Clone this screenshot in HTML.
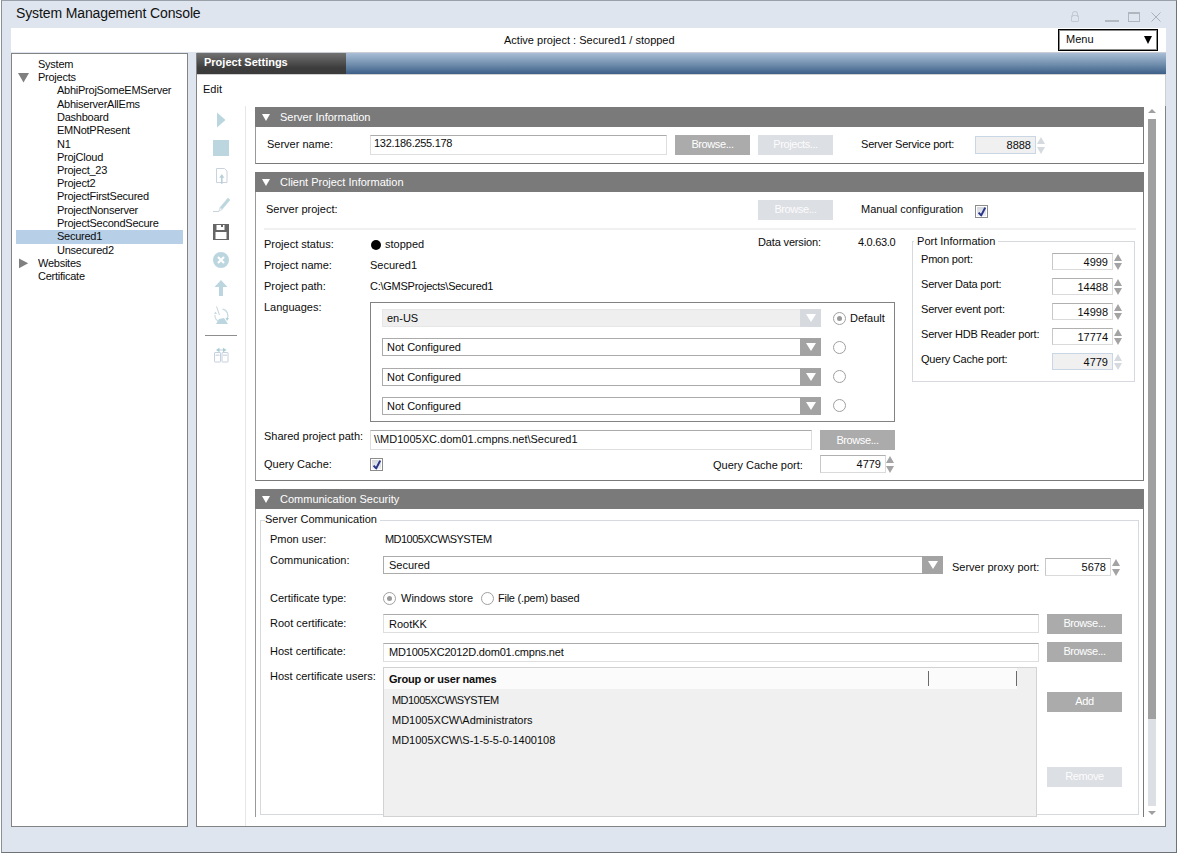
<!DOCTYPE html>
<html><head><meta charset="utf-8">
<style>
*{box-sizing:border-box;margin:0;padding:0}
html,body{width:1178px;height:854px;overflow:hidden;background:#fff;font-family:"Liberation Sans",sans-serif;font-size:11px;color:#0c0c0c}
.a{position:absolute}
.t{position:absolute;white-space:nowrap;line-height:13px;font-size:11px}
.sh{position:absolute;background:#7a7a7a;color:#fff;height:20px;left:255px;width:889px}
.sh i{position:absolute;left:7px;top:7px;width:0;height:0;border-left:4px solid transparent;border-right:4px solid transparent;border-top:7px solid #fff}
.sh span{position:absolute;left:25px;top:4px;line-height:13px;white-space:nowrap}
.btn{position:absolute;background:#ababab;color:#fff;text-align:center;line-height:19px;height:20px;width:75px;letter-spacing:-0.4px}
.btnd{position:absolute;background:#dcdfe3;color:#fcfcfd;text-align:center;line-height:19px;height:20px;width:75px;letter-spacing:-0.4px}
.tb{position:absolute;background:#fff;border:1px solid #dedede;border-top-color:#ababab}
.pb{position:absolute;background:#fff;border:1px solid #dadada;border-top-color:#b0b0b0;border-left-color:#c8c8c8;text-align:right;padding-right:4px;line-height:16px;height:17px;width:61px}
.sp{position:absolute;width:9px;height:17px}
.sp:before{content:"";position:absolute;left:0;top:1px;border-left:4px solid transparent;border-right:4px solid transparent;border-bottom:7.5px solid #a3a3a3}
.sp:after{content:"";position:absolute;left:0;bottom:0;border-left:4px solid transparent;border-right:4px solid transparent;border-top:7.5px solid #a3a3a3}
.sp.d:before{border-bottom-color:#d6dadf}
.sp.d:after{border-top-color:#d6dadf}
.cb{position:absolute;height:18px;background:#fff;border:1px solid #ababab}
.cb b{position:absolute;right:-1px;top:-1px;width:21px;height:18px;background:#a3a3a3}
.cb b:after{content:"";position:absolute;left:6px;top:5px;border-left:5px solid transparent;border-right:5px solid transparent;border-top:8px solid #fff}
.rd{position:absolute;width:13px;height:13px;border:1px solid #a0a0a0;border-radius:50%;background:#fff}
.rd.on:after{content:"";position:absolute;left:3px;top:3px;width:5px;height:5px;border-radius:50%;background:#999}
.ck{position:absolute;width:13px;height:13px;border:1px solid #8c8c8c;background:#fff}.ck:after{content:"";position:absolute;left:1px;top:1px;width:9px;height:9px;background:linear-gradient(#d3d7dd,#eef0f2)}
.grp{position:absolute;border:1px solid #d6d9dd}
</style></head><body>

<div class="a" style="left:1px;top:0;width:1176px;height:853px;background:#dfe5ee;border-top:1px solid #9aa0a8;border-left:1px solid #8a9098;border-right:1px solid #6e7378;border-bottom:1px solid #6e7378"></div>
<div class="t" style="left:16px;top:5px;font-size:14px;line-height:16px;letter-spacing:-0.12px;color:#111">System Management Console</div>
<div class="a" style="left:1071px;top:15px;width:8px;height:7px;border:1px solid #c3cad3;border-radius:1px"></div>
<div class="a" style="left:1072px;top:11px;width:6px;height:6px;border:1px solid #c3cad3;border-bottom:none;border-radius:3px 3px 0 0"></div>
<div class="a" style="left:1105px;top:20px;width:14px;height:2px;background:#b3b9c1"></div>
<div class="a" style="left:1128px;top:12px;width:12px;height:10px;border:1px solid #b0b6be;border-top-width:2px"></div>
<svg class="a" style="left:1151px;top:12px" width="10" height="10"><path d="M0.5 0.5L9.5 9.5M9.5 0.5L0.5 9.5" stroke="#a9b0b8" stroke-width="1"/></svg>
<div class="a" style="left:11px;top:28px;width:1155px;height:24px;background:#fff"></div>
<div class="t" style="left:504px;top:34px;">Active project : Secured1 / stopped</div>
<div class="a" style="left:1058px;top:29px;width:100px;height:22px;border:1px solid #000;box-shadow:inset 0 0 0 1px rgba(0,0,0,0.45);background:#fff"></div>
<div class="t" style="left:1066px;top:33px;">Menu</div>
<div class="a" style="left:1144px;top:36px;width:0;height:0;border-left:4.75px solid transparent;border-right:4.75px solid transparent;border-top:8px solid #000"></div>
<div class="a" style="left:11px;top:53px;width:177px;height:774px;background:#fff;border:1px solid #838383"></div>
<div class="a" style="left:16px;top:230px;width:167px;height:14px;background:#b7cfe7"></div>
<div class="t" style="left:38px;top:58px;letter-spacing:-0.25px">System</div>
<div class="t" style="left:38px;top:71px;letter-spacing:-0.25px">Projects</div>
<div class="t" style="left:57px;top:84px;letter-spacing:-0.25px">AbhiProjSomeEMServer</div>
<div class="t" style="left:57px;top:98px;letter-spacing:-0.25px">AbhiserverAllEms</div>
<div class="t" style="left:57px;top:111px;letter-spacing:-0.25px">Dashboard</div>
<div class="t" style="left:57px;top:124px;letter-spacing:-0.25px">EMNotPResent</div>
<div class="t" style="left:57px;top:138px;letter-spacing:-0.25px">N1</div>
<div class="t" style="left:57px;top:151px;letter-spacing:-0.25px">ProjCloud</div>
<div class="t" style="left:57px;top:164px;letter-spacing:-0.25px">Project_23</div>
<div class="t" style="left:57px;top:177px;letter-spacing:-0.25px">Project2</div>
<div class="t" style="left:57px;top:190px;letter-spacing:-0.25px">ProjectFirstSecured</div>
<div class="t" style="left:57px;top:204px;letter-spacing:-0.25px">ProjectNonserver</div>
<div class="t" style="left:57px;top:217px;letter-spacing:-0.25px">ProjectSecondSecure</div>
<div class="t" style="left:57px;top:230px;letter-spacing:-0.25px">Secured1</div>
<div class="t" style="left:57px;top:244px;letter-spacing:-0.25px">Unsecured2</div>
<div class="t" style="left:38px;top:257px;letter-spacing:-0.25px">Websites</div>
<div class="t" style="left:38px;top:270px;letter-spacing:-0.25px">Certificate</div>
<svg class="a" style="left:0;top:0" width="40" height="280"><path d="M18 73H29L23.5 82.6Z" fill="#808080"/><path d="M19 258.4V268.2L28.2 263.3Z" fill="#808080"/></svg>
<div class="a" style="left:196px;top:53px;width:970px;height:774px;background:#fff;border-left:1px solid #838383;border-right:1px solid #838383;border-bottom:1px solid #838383"></div>
<div class="a" style="left:197px;top:52px;width:969px;height:1px;background:#c9ced4"></div>
<div class="a" style="left:197px;top:53px;width:149px;height:21px;background:linear-gradient(#727272,#3d3d3d 70%,#3b3b3b)"></div>
<div class="a" style="left:346px;top:53px;width:820px;height:21px;background:linear-gradient(#a9bed6,#6f8dac 55%,#3d5f87)"></div>
<div class="a" style="left:1165px;top:74px;width:1px;height:32px;background:#cfcfcf"></div>
<div class="a" style="left:197px;top:74px;width:968px;height:1px;background:#d0d0d0"></div>
<div class="t" style="left:204px;top:56px;font-weight:bold;color:#fff">Project Settings</div>
<div class="t" style="left:203px;top:83px;">Edit</div>
<div class="a" style="left:245px;top:106px;width:1px;height:720px;background:#e6e6e6"></div>
<div class="a" style="left:255px;top:107px;width:889px;height:57px;border:1px solid #7a7a7a;border-left-color:#999;border-top:none"></div>
<div class="sh" style="top:107px"><i></i><span>Server Information</span></div>
<div class="t" style="left:267px;top:138px;">Server name:</div>
<div class="tb" style="left:370px;top:135px;width:297px;height:20px"></div>
<div class="t" style="left:374px;top:137px;letter-spacing:-0.3px">132.186.255.178</div>
<div class="btn" style="left:675px;top:135px">Browse...</div>
<div class="btnd" style="left:758px;top:135px">Projects...</div>
<div class="t" style="left:861px;top:138px;letter-spacing:-0.2px">Server Service port:</div>
<div class="pb" style="left:975px;top:136px;background:#f0f0f0;border-color:#c8d6e6;width:61px;height:18px;line-height:17px">8888</div>
<div class="sp d" style="left:1037px;top:136px;height:18px"></div>
<div class="a" style="left:255px;top:172px;width:889px;height:309px;border:1px solid #7a7a7a;border-left-color:#999;border-top:none"></div>
<div class="sh" style="top:172px"><i></i><span>Client Project Information</span></div>
<div class="t" style="left:266px;top:203px;">Server project:</div>
<div class="btnd" style="left:758px;top:200px">Browse...</div>
<div class="t" style="left:861px;top:203px;">Manual configuration</div>
<div class="ck" style="left:975px;top:205px"></div>
<svg class="a" style="left:975px;top:205px" width="13" height="13"><path d="M3.6 7.6L6.2 10.4L10.2 2.6" stroke="#28348a" stroke-width="2" fill="none" stroke-linejoin="round"/></svg>
<div class="a" style="left:264px;top:228px;width:872px;height:2px;background:#f0f0f0"></div>
<div class="t" style="left:264px;top:238px;">Project status:</div>
<div class="a" style="left:371px;top:239.5px;width:10px;height:10px;border-radius:50%;background:#000"></div>
<div class="t" style="left:385px;top:238px;">stopped</div>
<div class="t" style="left:758px;top:236px;letter-spacing:-0.15px">Data version:</div>
<div class="t" style="left:858px;top:236px;letter-spacing:-0.3px">4.0.63.0</div>
<div class="t" style="left:264px;top:259px;">Project name:</div>
<div class="t" style="left:370px;top:259px;">Secured1</div>
<div class="t" style="left:264px;top:280px;">Project path:</div>
<div class="t" style="left:370px;top:280px;letter-spacing:-0.25px">C:\GMSProjects\Secured1</div>
<div class="t" style="left:264px;top:301px;">Languages:</div>
<div class="a" style="left:370px;top:302px;width:525px;height:120px;border:1px solid #828282"></div>
<div class="a" style="left:382px;top:309px;width:439px;height:18px;background:#efefef;border:1px solid #e6e6e6"></div>
<div class="a" style="left:800px;top:309px;width:21px;height:18px;background:#d6dadf"></div>
<div class="a" style="left:806px;top:314px;width:0;height:0;border-left:5px solid transparent;border-right:5px solid transparent;border-top:8px solid #fff"></div>
<div class="t" style="left:387px;top:312px;">en-US</div>
<div class="cb" style="left:382px;top:338px;width:439px"><b></b></div>
<div class="t" style="left:387px;top:341px;">Not Configured</div>
<div class="cb" style="left:382px;top:368px;width:439px"><b></b></div>
<div class="t" style="left:387px;top:371px;">Not Configured</div>
<div class="cb" style="left:382px;top:397px;width:439px"><b></b></div>
<div class="t" style="left:387px;top:400px;">Not Configured</div>
<div class="rd on" style="left:833px;top:312px"></div>
<div class="t" style="left:850px;top:312px;">Default</div>
<div class="rd" style="left:833px;top:341px"></div>
<div class="rd" style="left:833px;top:370px"></div>
<div class="rd" style="left:833px;top:399px"></div>
<div class="t" style="left:264px;top:430px;">Shared project path:</div>
<div class="tb" style="left:370px;top:430px;width:442px;height:20px"></div>
<div class="t" style="left:374px;top:433px;">\\MD1005XC.dom01.cmpns.net\Secured1</div>
<div class="btn" style="left:820px;top:430px;width:75px;line-height:21px">Browse...</div>
<div class="t" style="left:264px;top:458px;">Query Cache:</div>
<div class="ck" style="left:370px;top:458px"></div>
<svg class="a" style="left:370px;top:458px" width="13" height="13"><path d="M3.6 7.6L6.2 10.4L10.2 2.6" stroke="#28348a" stroke-width="2" fill="none" stroke-linejoin="round"/></svg>
<div class="t" style="left:713px;top:459px;">Query Cache port:</div>
<div class="pb" style="left:820px;top:455px;width:66px;height:18px;line-height:17px">4779</div>
<div class="sp" style="left:886px;top:455px;height:18px"></div>
<div class="grp" style="left:912px;top:241px;width:223px;height:141px"></div>
<div class="t" style="left:914px;top:235px;background:#fff">&nbsp;Port Information&nbsp;</div>
<div class="t" style="left:921px;top:253px;letter-spacing:-0.2px">Pmon port:</div>
<div class="pb" style="left:1052px;top:253px;">4999</div>
<div class="sp" style="left:1114px;top:253px"></div>
<div class="t" style="left:921px;top:278px;letter-spacing:-0.2px">Server Data port:</div>
<div class="pb" style="left:1052px;top:278px;">14488</div>
<div class="sp" style="left:1114px;top:278px"></div>
<div class="t" style="left:921px;top:303px;letter-spacing:-0.2px">Server event port:</div>
<div class="pb" style="left:1052px;top:303px;">14998</div>
<div class="sp" style="left:1114px;top:303px"></div>
<div class="t" style="left:921px;top:328px;letter-spacing:-0.2px">Server HDB Reader port:</div>
<div class="pb" style="left:1052px;top:328px;">17774</div>
<div class="sp" style="left:1114px;top:328px"></div>
<div class="t" style="left:921px;top:353px;letter-spacing:-0.2px">Query Cache port:</div>
<div class="pb" style="left:1052px;top:353px;background:#f0f0f0;border-color:#c8d6e6;">4779</div>
<div class="sp d" style="left:1114px;top:353px"></div>
<div class="a" style="left:255px;top:489px;width:889px;height:328px;border:1px solid #7a7a7a;border-left-color:#999;border-top:none;border-bottom:none"></div>
<div class="sh" style="top:489px"><i></i><span>Communication Security</span></div>
<div class="grp" style="left:260px;top:520px;width:879px;height:295px"></div>
<div class="t" style="left:265px;top:513px;background:#fff">Server Communication&nbsp;</div>
<div class="t" style="left:270px;top:533px;">Pmon user:</div>
<div class="t" style="left:385px;top:533px;letter-spacing:-0.55px">MD1005XCW\SYSTEM</div>
<div class="t" style="left:270px;top:554px;">Communication:</div>
<div class="cb" style="left:383px;top:556px;width:560px"><b></b></div>
<div class="t" style="left:389px;top:559px;">Secured</div>
<div class="t" style="left:952px;top:561px;">Server proxy port:</div>
<div class="pb" style="left:1045px;top:558px;width:66px;height:18px;line-height:17px">5678</div>
<div class="sp" style="left:1112px;top:558px;height:18px"></div>
<div class="t" style="left:270px;top:592px;">Certificate type:</div>
<div class="rd on" style="left:383px;top:592px"></div>
<div class="t" style="left:401px;top:592px;">Windows store</div>
<div class="rd" style="left:481px;top:592px"></div>
<div class="t" style="left:498px;top:592px;letter-spacing:-0.25px">File (.pem) based</div>
<div class="t" style="left:270px;top:617px;">Root certificate:</div>
<div class="tb" style="left:383px;top:614px;width:656px;height:19px"></div>
<div class="t" style="left:389px;top:618px;">RootKK</div>
<div class="btn" style="left:1047px;top:614px">Browse...</div>
<div class="t" style="left:270px;top:645px;">Host certificate:</div>
<div class="tb" style="left:383px;top:643px;width:656px;height:19px"></div>
<div class="t" style="left:389px;top:646px;letter-spacing:-0.18px">MD1005XC2012D.dom01.cmpns.net</div>
<div class="btn" style="left:1047px;top:642px">Browse...</div>
<div class="t" style="left:270px;top:670px;">Host certificate users:</div>
<div class="a" style="left:383px;top:667px;width:654px;height:150px;background:#f0f0f0;border:1px solid #d2d2d2"></div>
<div class="a" style="left:384px;top:668px;width:633px;height:21px;background:#fbfbfb"></div>
<div class="a" style="left:928px;top:671px;width:1px;height:15px;background:#6a6a6a"></div>
<div class="a" style="left:1016px;top:671px;width:1px;height:15px;background:#6a6a6a"></div>
<div class="t" style="left:389px;top:673px;font-weight:bold;letter-spacing:-0.2px">Group or user names</div>
<div class="t" style="left:392px;top:694px;letter-spacing:-0.55px">MD1005XCW\SYSTEM</div>
<div class="t" style="left:392px;top:714px;">MD1005XCW\Administrators</div>
<div class="t" style="left:392px;top:734px;">MD1005XCW\S-1-5-5-0-1400108</div>
<div class="btn" style="left:1047px;top:692px">Add</div>
<div class="btnd" style="left:1047px;top:767px">Remove</div>
<div class="a" style="left:1148px;top:109px;width:0;height:0;border-left:4px solid transparent;border-right:4px solid transparent;border-bottom:4px solid #a0a0a0"></div>
<div class="a" style="left:1148px;top:119px;width:8px;height:600px;background:#a0a0a0"></div>
<div class="a" style="left:1148px;top:719px;width:8px;height:87px;background:#dcdfe3"></div>
<div class="a" style="left:1148px;top:811px;width:0;height:0;border-left:4px solid transparent;border-right:4px solid transparent;border-top:4px solid #a0a0a0"></div>
<svg class="a" style="left:210px;top:108px" width="24" height="24"><path d="M7 4.5L15.5 12L7 19.5Z" fill="#bcd6df"/></svg>
<div class="a" style="left:213px;top:140px;width:16px;height:16px;background:#bcd6df"></div>
<svg class="a" style="left:210px;top:165px" width="24" height="22"><path d="M6.5 3.5H14.5L17 6V17.5H6.5Z" fill="none" stroke="#c9d2de" stroke-width="1"/><path d="M11.8 9L9.2 12.8H11V18.8H12.6V12.8H14.4Z" fill="#b9d0da"/></svg>
<svg class="a" style="left:210px;top:193px" width="24" height="22"><path d="M3 18.5H9" stroke="#c8d3dc" stroke-width="1"/><path d="M9 18L10 14.5L18 5L20 7L12 16.5Z" fill="#bcd6df" stroke="#c8d8e0" stroke-width="0.6"/><path d="M9 18L10.5 14.8L12 16.5Z" fill="#fff" stroke="#d0dae0" stroke-width="0.6"/></svg>
<svg class="a" style="left:213px;top:224px" width="16" height="16"><path d="M0 0H16V16H0Z" fill="#666"/><rect x="3.5" y="1" width="8" height="5" fill="#fff"/><rect x="8" y="1" width="2" height="2" fill="#666"/><rect x="2.5" y="8" width="11" height="7" fill="#fff"/></svg>
<svg class="a" style="left:213px;top:252px" width="16" height="16"><circle cx="8" cy="8" r="8" fill="#bcd6df"/><path d="M5 5L11 11M11 5L5 11" stroke="#fff" stroke-width="2.2"/></svg>
<svg class="a" style="left:213px;top:279px" width="16" height="18"><path d="M8 1L14.5 8H10V17H6V8H1.5Z" fill="#bcd6df"/></svg>
<svg class="a" style="left:211px;top:305px" width="20" height="20"><path d="M11.5 4.2A6.5 6.5 0 0 1 16 14" stroke="#c5d9e0" stroke-width="1.2" fill="none"/><path d="M4 10A6.5 6.5 0 0 0 7 16" stroke="#d0dde5" stroke-width="1.2" fill="none"/><path d="M5.5 1.5L8.5 10" stroke="#c5d3dc" stroke-width="1"/><path d="M5 19L8 14L13 13L17 19Z" fill="#bcd6df"/><path d="M14.5 13L16 16L18 13Z" fill="#b0d0da"/><path d="M3 9L4.5 6.5L6 9Z" fill="#c8d8e0"/></svg>
<div class="a" style="left:205px;top:335px;width:32px;height:1px;background:#8e8e8e"></div>
<svg class="a" style="left:212px;top:346px" width="18" height="18"><rect x="2.5" y="6.5" width="6" height="9.5" rx="0.5" fill="none" stroke="#c6d0de"/><rect x="10" y="6.5" width="6" height="9.5" rx="0.5" fill="none" stroke="#c6d0de"/><rect x="3.5" y="8.5" width="4" height="1.5" fill="#d5dde8"/><rect x="11" y="8.5" width="4" height="1.5" fill="#d5dde8"/><path d="M6 4H12" stroke="#c4ccd6" stroke-width="1"/><path d="M4 4L7.5 1.8V6.2Z" fill="#a6cdd6"/><path d="M14.5 4L11 1.8V6.2Z" fill="#a6cdd6"/></svg>
</body></html>
